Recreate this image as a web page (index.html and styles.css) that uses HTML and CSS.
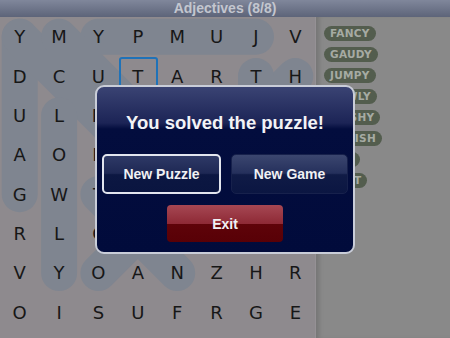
FILE: index.html
```html
<!DOCTYPE html>
<html>
<head>
<meta charset="utf-8">
<link rel="stylesheet" href="styles.css">
</head>
<body>
<div class="app">
  <div class="title">Adjectives (8/8)</div>
  <div class="main">
    <div class="board">
      <svg class="marks" width="315" height="315" viewBox="0 0 315 315">
        <g stroke="#7f8590" stroke-width="36" stroke-linecap="round" fill="none">
          <line x1="98.4" y1="19.7" x2="256" y2="19.7"/>
          <line x1="19.7" y1="19.7" x2="19.7" y2="177.2"/>
          <line x1="19.7" y1="19.7" x2="177.2" y2="177.2"/>
          <line x1="59.1" y1="19.7" x2="216.6" y2="177.2"/>
          <line x1="59.1" y1="98.4" x2="59.1" y2="256"/>
          <line x1="98.4" y1="256" x2="295.3" y2="59.1"/>
          <line x1="98.4" y1="177.2" x2="177.2" y2="256"/>
          <line x1="256" y1="59.1" x2="256" y2="177.2"/>
        </g>
      </svg>
      <div class="grid">
        <span>Y</span><span>M</span><span>Y</span><span>P</span><span>M</span><span>U</span><span>J</span><span>V</span>
        <span>D</span><span>C</span><span>U</span><span class="sel">T</span><span>A</span><span>R</span><span>T</span><span>H</span>
        <span>U</span><span>L</span><span>N</span><span class="hid">S</span><span class="hid">E</span><span class="hid">K</span><span class="hid">S</span><span class="hid">O</span>
        <span>A</span><span>O</span><span>B</span><span class="hid">A</span><span class="hid">H</span><span class="hid">I</span><span class="hid">A</span><span class="hid">P</span>
        <span>G</span><span>W</span><span>T</span><span class="hid">R</span><span class="hid">F</span><span class="hid">Y</span><span class="hid">V</span><span class="hid">M</span>
        <span>R</span><span>L</span><span>C</span><span class="hid">A</span><span class="hid">D</span><span class="hid">W</span><span class="hid">E</span><span class="hid">Q</span>
        <span>V</span><span>Y</span><span>O</span><span>A</span><span>N</span><span>Z</span><span>H</span><span>R</span>
        <span>O</span><span>I</span><span>S</span><span>U</span><span>F</span><span>R</span><span>G</span><span>E</span>
      </div>
    </div>
    <div class="words">
      <span class="word">FANCY</span>
      <span class="word">GAUDY</span>
      <span class="word">JUMPY</span>
      <span class="word">LOWLY</span>
      <span class="word">MUSHY</span>
      <span class="word">OAFISH</span>
      <span class="word">TAN</span>
      <span class="word">VAST</span>
    </div>
  </div>
  <div class="dialog">
    <div class="dialog-title">You solved the puzzle!</div>
    <div class="btn-row">
      <div class="btn btn-focus">New Puzzle</div>
      <div class="btn">New Game</div>
    </div>
    <div class="exit-row">
      <div class="btn btn-exit">Exit</div>
    </div>
  </div>
</div>
</body>
</html>
```
FILE: styles.css
```css
html, body {
  margin: 0;
  padding: 0;
}
body {
  width: 450px;
  height: 338px;
  overflow: hidden;
  background: #8c888c;
}
.app {
  position: relative;
  width: 450px;
  height: 338px;
  display: flex;
  flex-direction: column;
  font-family: "Liberation Sans", Arial, sans-serif;
}
.title {
  height: 17px;
  line-height: 17px;
  flex: none;
  text-align: center;
  font-weight: bold;
  font-size: 14px;
  color: #c3c6cf;
  background: linear-gradient(#80879b, #5d6479);
}
.main {
  flex: 1;
  display: flex;
  min-height: 0;
}
.board {
  position: relative;
  width: 315px;
  flex: none;
  background: #8e8a8e;
}
.marks {
  position: absolute;
  left: 0;
  top: 0;
}
.grid {
  position: relative;
  width: 315px;
  height: 315px;
  display: grid;
  grid-template-columns: repeat(8, 1fr);
  grid-template-rows: repeat(8, 1fr);
  font-family: "DejaVu Sans", sans-serif;
  font-size: 18px;
  color: #171717;
}
.grid span {
  display: flex;
  align-items: center;
  justify-content: center;
  position: relative;
}
.grid .hid {
  visibility: hidden;
}
.grid .sel::before {
  content: "";
  position: absolute;
  left: 1px;
  top: 1px;
  right: 0;
  bottom: 0;
  border: 2px solid #1f72b8;
  border-radius: 3px;
}
.words {
  flex: 1;
  display: flex;
  flex-direction: column;
  align-items: flex-start;
  gap: 6px;
  padding: 9px 0 0 9px;
  background: #898989;
  box-shadow: inset 1px 0 0 #959195, inset 6px 0 4px -2px #767676;
}
.word {
  height: 15px;
  line-height: 15px;
  padding: 0 6px;
  border-radius: 8px;
  background: #535d4e;
  color: #a6aba3;
  font-family: "DejaVu Sans", sans-serif;
  font-weight: bold;
  font-size: 10.5px;
  letter-spacing: 0.3px;
}
.dialog {
  position: absolute;
  left: 95px;
  top: 85px;
  width: 256px;
  height: 165px;
  border: 2px solid #c9cdd8;
  border-radius: 9px;
  background: linear-gradient(#3a4373 0px, #1c2456 36px, #030d3e 42px, #010b3b 100%);
  display: flex;
  flex-direction: column;
  align-items: center;
}
.dialog-title {
  margin-top: 25px;
  font-size: 18.5px;
  font-weight: bold;
  color: #f2f3f6;
}
.btn-row {
  margin-top: 20px;
  display: flex;
  gap: 10px;
  width: 246px;
}
.btn {
  flex: 1;
  height: 38px;
  display: flex;
  align-items: center;
  justify-content: center;
  color: #f0f1f4;
  font-weight: bold;
  font-size: 14px;
  border-radius: 5px;
  border: 1px solid #17214c;
  background: linear-gradient(#3b466f 0%, #25305c 48%, #101b46 52%, #0b1642 100%);
}
.btn-focus {
  height: 36px;
  border: 2px solid #e2e5ee;
  background: linear-gradient(#2e3966 0%, #1e2854 48%, #0c1742 52%, #0a1540 100%);
}
.exit-row {
  margin-top: 11px;
  display: flex;
  justify-content: center;
}
.btn-exit {
  flex: none;
  width: 116px;
  height: 37px;
  border: none;
  border-radius: 4px;
  background: linear-gradient(#a64753 0%, #8e2a36 50%, #5e0309 52%, #580006 100%);
}
```
